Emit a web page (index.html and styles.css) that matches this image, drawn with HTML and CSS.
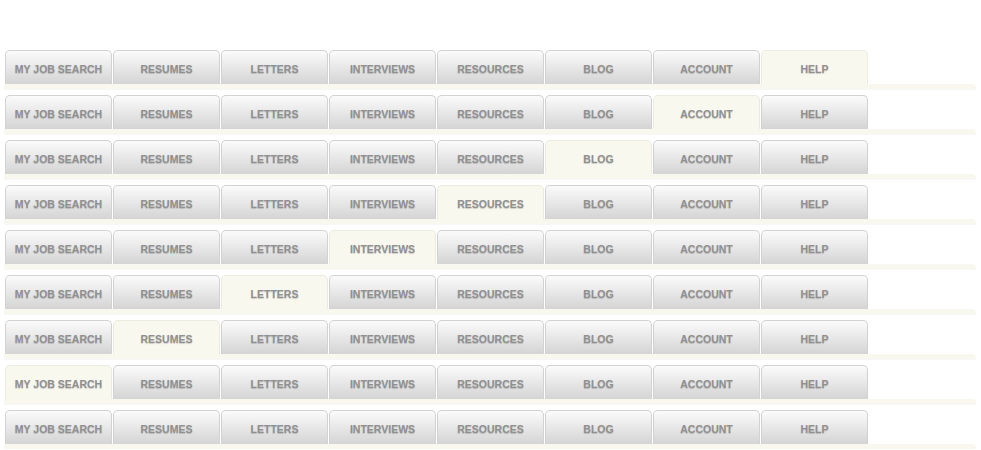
FILE: index.html
```html
<!DOCTYPE html>
<html>
<head>
<meta charset="utf-8">
<link rel="stylesheet" href="styles.css">
</head>
<body>
<div class="page">
  <div class="nav">
    <div class="tabs">
      <div class="tab">MY JOB SEARCH</div><div class="tab">RESUMES</div><div class="tab">LETTERS</div><div class="tab">INTERVIEWS</div><div class="tab">RESOURCES</div><div class="tab">BLOG</div><div class="tab">ACCOUNT</div><div class="tab active">HELP</div>
    </div>
    <div class="bar"></div>
  </div>
  <div class="nav">
    <div class="tabs">
      <div class="tab">MY JOB SEARCH</div><div class="tab">RESUMES</div><div class="tab">LETTERS</div><div class="tab">INTERVIEWS</div><div class="tab">RESOURCES</div><div class="tab">BLOG</div><div class="tab active">ACCOUNT</div><div class="tab">HELP</div>
    </div>
    <div class="bar"></div>
  </div>
  <div class="nav">
    <div class="tabs">
      <div class="tab">MY JOB SEARCH</div><div class="tab">RESUMES</div><div class="tab">LETTERS</div><div class="tab">INTERVIEWS</div><div class="tab">RESOURCES</div><div class="tab active">BLOG</div><div class="tab">ACCOUNT</div><div class="tab">HELP</div>
    </div>
    <div class="bar"></div>
  </div>
  <div class="nav">
    <div class="tabs">
      <div class="tab">MY JOB SEARCH</div><div class="tab">RESUMES</div><div class="tab">LETTERS</div><div class="tab">INTERVIEWS</div><div class="tab active">RESOURCES</div><div class="tab">BLOG</div><div class="tab">ACCOUNT</div><div class="tab">HELP</div>
    </div>
    <div class="bar"></div>
  </div>
  <div class="nav">
    <div class="tabs">
      <div class="tab">MY JOB SEARCH</div><div class="tab">RESUMES</div><div class="tab">LETTERS</div><div class="tab active">INTERVIEWS</div><div class="tab">RESOURCES</div><div class="tab">BLOG</div><div class="tab">ACCOUNT</div><div class="tab">HELP</div>
    </div>
    <div class="bar"></div>
  </div>
  <div class="nav">
    <div class="tabs">
      <div class="tab">MY JOB SEARCH</div><div class="tab">RESUMES</div><div class="tab active">LETTERS</div><div class="tab">INTERVIEWS</div><div class="tab">RESOURCES</div><div class="tab">BLOG</div><div class="tab">ACCOUNT</div><div class="tab">HELP</div>
    </div>
    <div class="bar"></div>
  </div>
  <div class="nav">
    <div class="tabs">
      <div class="tab">MY JOB SEARCH</div><div class="tab active">RESUMES</div><div class="tab">LETTERS</div><div class="tab">INTERVIEWS</div><div class="tab">RESOURCES</div><div class="tab">BLOG</div><div class="tab">ACCOUNT</div><div class="tab">HELP</div>
    </div>
    <div class="bar"></div>
  </div>
  <div class="nav">
    <div class="tabs">
      <div class="tab active">MY JOB SEARCH</div><div class="tab">RESUMES</div><div class="tab">LETTERS</div><div class="tab">INTERVIEWS</div><div class="tab">RESOURCES</div><div class="tab">BLOG</div><div class="tab">ACCOUNT</div><div class="tab">HELP</div>
    </div>
    <div class="bar"></div>
  </div>
  <div class="nav">
    <div class="tabs">
      <div class="tab">MY JOB SEARCH</div><div class="tab">RESUMES</div><div class="tab">LETTERS</div><div class="tab">INTERVIEWS</div><div class="tab">RESOURCES</div><div class="tab">BLOG</div><div class="tab">ACCOUNT</div><div class="tab">HELP</div>
    </div>
    <div class="bar"></div>
  </div>
</div>
</body>
</html>
```
FILE: styles.css
```css
html, body {
  margin: 0;
  padding: 0;
  background: #ffffff;
}
.page {
  padding: 50px 0 0 0;
  display: flex;
  flex-direction: column;
  gap: 6px;
}
.nav {
  display: flex;
  flex-direction: column;
}
.tabs {
  display: flex;
  gap: 1px;
  padding-left: 5px;
  height: 34px;
}
.tab {
  box-sizing: border-box;
  width: 107px;
  height: 34px;
  border: 1px solid #d2d2d2;
  border-bottom: none;
  border-radius: 5px 5px 0 0;
  background: linear-gradient(#fbfbfb, #d4d4d4);
  font-family: "Liberation Sans", Arial, sans-serif;
  font-weight: bold;
  font-size: 10.5px;
  color: #909090;
  text-shadow: 0 1px 1px rgba(0, 0, 0, 0.18);
  display: flex;
  align-items: center;
  justify-content: center;
  padding-top: 3px;
}
.tab.active {
  background: #f8f8ef;
  border-color: #ebebdf;
}
.bar {
  margin-left: 4px;
  width: 972px;
  height: 5px;
  background: #f8f8ef;
  border-radius: 0 4px 0 0;
  box-shadow: 0 1px 0 rgba(0, 0, 0, 0.03);
}
```
